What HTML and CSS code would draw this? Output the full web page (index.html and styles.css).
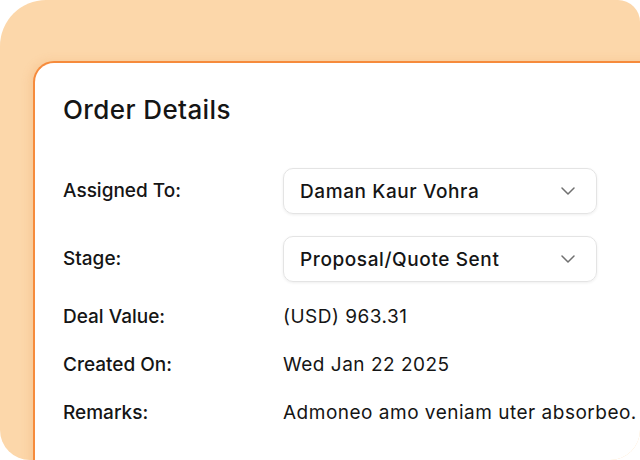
FILE: index.html
```html
<!DOCTYPE html>
<html>
<head>
<meta charset="utf-8">
<link rel="stylesheet" href="styles.css">
</head>
<body>
<div class="frame">
  <div class="card">
    <h1 class="title">Order Details</h1>
    <div class="details">
      <div class="label">Assigned To:</div>
      <div class="select">
        <span>Daman Kaur Vohra</span>
        <svg class="chev" width="14" height="8" viewBox="0 0 14 8"><path d="M1 1l6 6 6-6" fill="none" stroke="#707070" stroke-width="1.5" stroke-linecap="round" stroke-linejoin="round"/></svg>
      </div>
      <div class="label">Stage:</div>
      <div class="select">
        <span>Proposal/Quote Sent</span>
        <svg class="chev" width="14" height="8" viewBox="0 0 14 8"><path d="M1 1l6 6 6-6" fill="none" stroke="#707070" stroke-width="1.5" stroke-linecap="round" stroke-linejoin="round"/></svg>
      </div>
      <div class="label">Deal Value:</div>
      <div class="value">(USD) 963.31</div>
      <div class="label">Created On:</div>
      <div class="value">Wed Jan 22 2025</div>
      <div class="label">Remarks:</div>
      <div class="value">Admoneo amo veniam uter absorbeo.</div>
    </div>
  </div>
</div>
</body>
</html>
```

FILE: styles.css
```css
html, body {
  margin: 0;
  padding: 0;
  background: #ffffff;
}
body {
  font-family: "Inter", "Noto Sans", sans-serif;
  color: #151515;
}
.frame {
  width: 640px;
  height: 460px;
  background: #fcd7aa;
  border-radius: 46px 22px 30px 30px;
  overflow: hidden;
  display: flex;
  align-items: flex-start;
}
.card {
  flex: none;
  margin-left: 33px;
  margin-top: 61px;
  width: 660px;
  height: 460px;
  box-sizing: border-box;
  background: #ffffff;
  border-top: 2px solid #f68b3c;
  border-left: 2px solid #f68b3c;
  border-top-left-radius: 21px;
  box-shadow: -3px 0 10px rgba(225, 140, 60, 0.18);
  padding: 32px 0 0 28px;
}
.title {
  margin: 0;
  font-size: 26px;
  line-height: 30px;
  font-weight: 500;
  letter-spacing: 0.4px;
}
.details {
  margin-top: 43px;
  display: grid;
  grid-template-columns: 220px 314px;
  row-gap: 22px;
  align-items: center;
}
.label {
  font-size: 19px;
  font-weight: 500;
  line-height: 26px;
}
.select {
  height: 46px;
  box-sizing: border-box;
  border: 1px solid #e4e4e4;
  border-radius: 10px;
  box-shadow: 0 1px 3px rgba(0, 0, 0, 0.07);
  display: flex;
  align-items: center;
  justify-content: space-between;
  padding: 0 21px 0 16px;
  font-size: 19px;
  font-weight: 500;
  letter-spacing: 0.6px;
}
.value {
  font-size: 19px;
  font-weight: 400;
  line-height: 26px;
  letter-spacing: 0.5px;
  white-space: nowrap;
}
.chev {
  display: block;
}
```
